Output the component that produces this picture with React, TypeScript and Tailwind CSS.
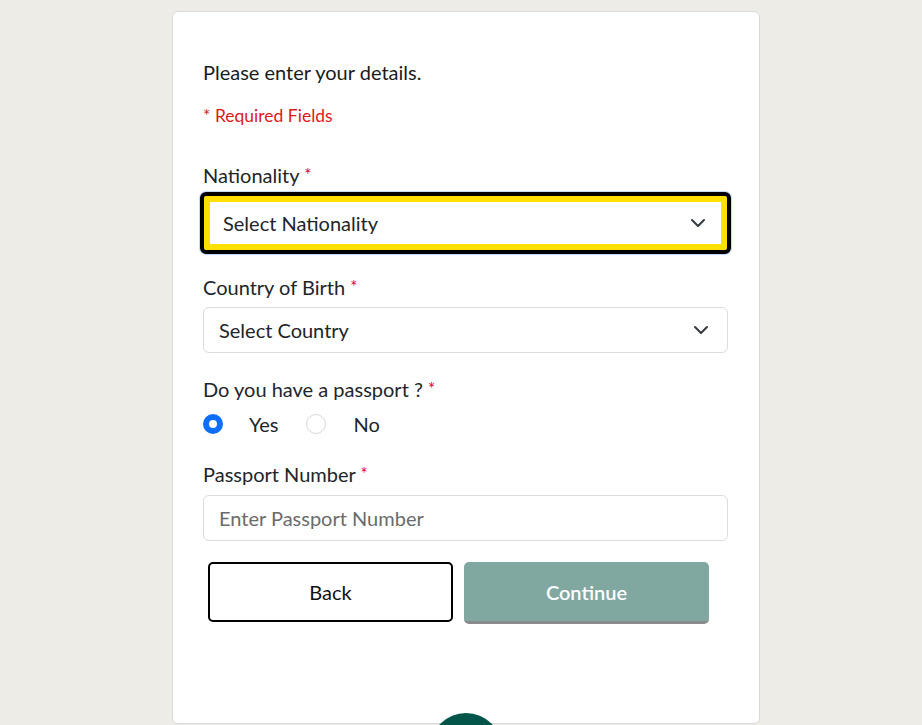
import { useState } from 'react';

function Chevron() {
	return (
		<svg width="16" height="16" viewBox="0 0 16 16" aria-hidden className="shrink-0">
			<path d="M2 5l6 6 6-6" fill="none" stroke="#343a40" strokeWidth="2" strokeLinecap="round" strokeLinejoin="round" />
		</svg>
	);
}

function Label({ text }: { text: string }) {
	return (
		<p className="h-[24px] text-[20px] leading-[24px] text-[#212529]">
			{text} <span className="align-top text-[17px] leading-[24px] text-[#e4002b]">*</span>
		</p>
	);
}

function Radio({ checked }: { checked: boolean }) {
	return (
		<span
			className={`h-[20px] w-[20px] shrink-0 rounded-full ${
				checked ? 'border-[6px] border-[#0d6efd] bg-white' : 'border border-[#d6d6d6] bg-white'
			}`}
		/>
	);
}

export default function App() {
	const [hasPassport, setHasPassport] = useState(true);

	return (
		<div className="h-[725px] overflow-hidden bg-[#edece6] font-['Lato','Liberation_Sans',sans-serif]">
			<div className="relative ml-[172px] h-[725px] w-[588px] pt-[11px]">
				<div className="flex h-[713px] flex-col rounded-[6px] border border-[#d9d9d9] bg-white pl-[30px] pr-[31px] pt-[48px]">
					<p className="h-[24px] text-[20px] leading-[24px] text-[#1b1b1b]">Please enter your details.</p>
					<p className="mt-[20px] h-[24px] text-[17.5px] leading-[24px] text-[#dd1a1a]">* Required Fields</p>

					<div className="mt-[35px]">
						<Label text="Nationality" />
						<div className="-mx-[3px] mt-[5px] flex h-[62px] items-center justify-between rounded-[6px] border-4 border-black px-[19px] shadow-[inset_0_0_0_6px_#ffe000,0_0_0_1px_#c3d9fb]">
							<span className="text-[20px] text-[#212529]">Select Nationality</span>
							<span className="mr-[2px]"><Chevron /></span>
						</div>
					</div>

					<div className="mt-[21px]">
						<Label text="Country of Birth" />
						<div className="mt-[8px] flex h-[46px] items-center justify-between rounded-[6px] border border-[#dcdcdc] pl-[15px] pr-[18px]">
							<span className="text-[20px] text-[#212529]">Select Country</span>
							<Chevron />
						</div>
					</div>

					<div className="mt-[24px]">
						<Label text="Do you have a passport ?" />
						<div className="mt-[11px] flex h-[24px] items-center">
							<button type="button" onClick={() => setHasPassport(true)} className="flex items-center">
								<Radio checked={hasPassport} />
								<span className="ml-[26px] text-[20px] leading-[24px] text-[#212529]">Yes</span>
							</button>
							<button type="button" onClick={() => setHasPassport(false)} className="ml-[27px] flex items-center">
								<Radio checked={!hasPassport} />
								<span className="ml-[28px] text-[20px] leading-[24px] text-[#212529]">No</span>
							</button>
						</div>
					</div>

					<div className="mt-[26px]">
						<Label text="Passport Number" />
						<input
							className="mt-[9px] h-[46px] w-full rounded-[6px] border border-[#dcdcdc] px-[15px] text-[20px] text-[#212529] outline-none placeholder:text-[#6b6b6b]"
							placeholder="Enter Passport Number"
						/>
					</div>

					<div className="mt-[21px] flex gap-[11px] pl-[5px]">
						<button
							type="button"
							className="h-[60px] w-[245px] rounded-[5px] border-2 border-black bg-white text-[20px] text-[#111]"
						>
							Back
						</button>
						<button
							type="button"
							className="h-[62px] w-[245px] rounded-[5px] border-b-[3px] border-[#8a8a8a] bg-[#80a8a1] text-[20px] font-semibold text-white"
						>
							Continue
						</button>
					</div>
				</div>
				<div className="absolute left-[258px] top-[713px] h-[72px] w-[72px] rounded-full bg-[#03554a]" />
			</div>
		</div>
	);
}
